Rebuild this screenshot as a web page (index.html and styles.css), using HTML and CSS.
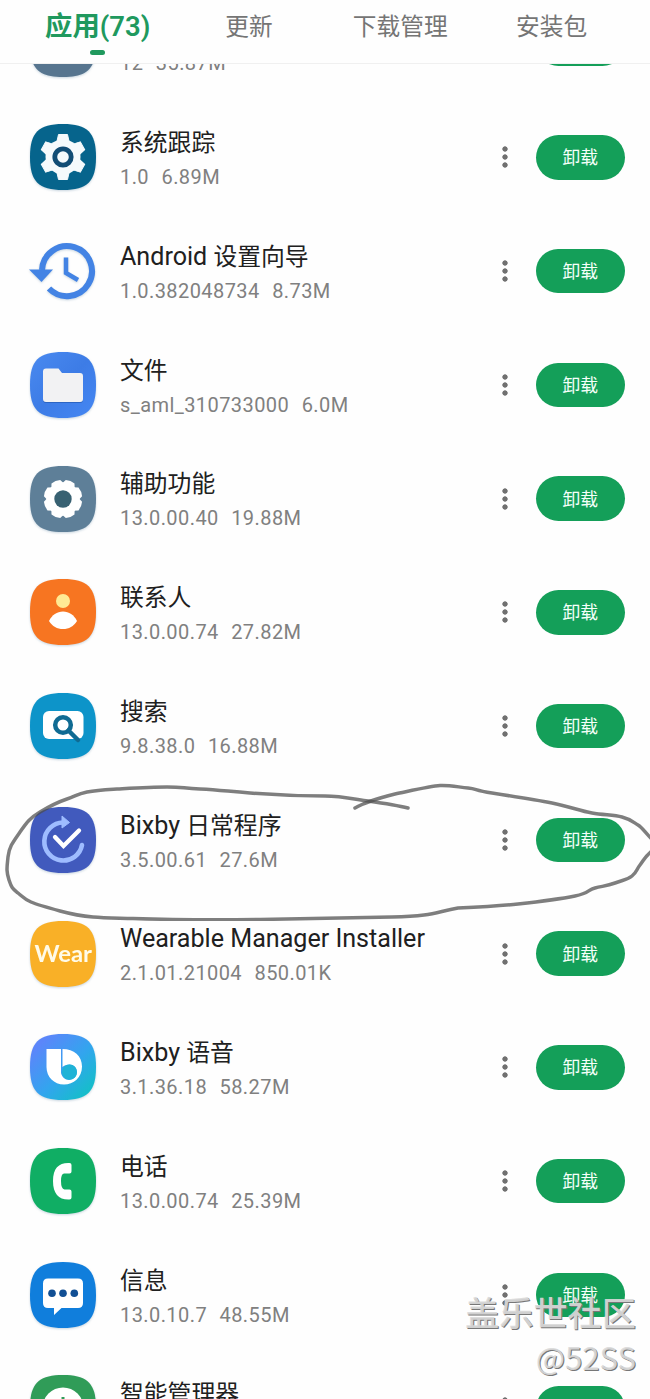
FILE: index.html
```
<!DOCTYPE html>
<html lang="zh-CN">
<head>
<meta charset="utf-8">
<title>应用管理</title>
<link rel="stylesheet" href="styles.css">
</head>
<body>
<svg class="defs" width="0" height="0">
  <defs>
    <path id="tile" d="M33 0C57.5 0 66 8.500 66 33S57.500 66 33 66 0 57.500 0 33 8.500 0 33 0Z"/>
    <linearGradient id="voice" x1="0" y1="0" x2="1" y2="1">
      <stop offset=".15" stop-color="#5b86fa"/><stop offset=".55" stop-color="#32a5ee"/><stop offset=".9" stop-color="#14bfc8"/>
    </linearGradient>
    <linearGradient id="folder" x1="0" y1="0" x2="1" y2="1">
      <stop offset="0" stop-color="#4a8af0"/><stop offset=".5" stop-color="#3d7ce6"/><stop offset="1" stop-color="#4587f3"/>
    </linearGradient>
  </defs>
</svg>
<div class="screen">
  <nav class="tabs">
    <a class="tab active">应用(73)</a>
    <a class="tab">更新</a>
    <a class="tab">下载管理</a>
    <a class="tab">安装包</a>
  </nav>
  <main class="viewport">
    <ul class="list">
      <li class="row">
        <svg class="icon" viewBox="0 0 66 66"><use href="#tile" fill="#57758f"/></svg>
        <div class="info"><div class="name">&nbsp;</div><div class="meta"><span>12</span><span>35.87M</span></div></div>
        <i class="more"></i><button class="remove"></button>
      </li>
      <li class="row">
        <svg class="icon" viewBox="0 0 66 66"><use href="#tile" fill="#06648c"/><g fill="#f5fafc"><circle cx="33" cy="33" r="17.500"/><g id="tooth"><path id="t" d="M28.500 10.500h9l2 9h-13z" stroke="#f5fafc" stroke-linejoin="round"/><use href="#t" transform="rotate(60 33 33)"/><use href="#t" transform="rotate(120 33 33)"/></g><use href="#tooth" transform="rotate(180 33 33)"/></g><circle cx="33" cy="33" r="8.200" fill="none" stroke="#114d75" stroke-width="4.800"/></svg>
        <div class="info"><div class="name"><span class="zh">系统跟踪</span></div><div class="meta"><span>1.0</span><span>6.89M</span></div></div>
        <i class="more"></i><button class="remove">卸载</button>
      </li>
      <li class="row">
        <svg class="icon" viewBox="0 0 66 66"><g fill="none" stroke="#4383e4" stroke-width="6"><path d="M12 32A25 25 0 1 1 19 50.500"/><path d="M36 19.500v15.500l12 7" stroke-width="4.500"/></g><path d="M-1 31.500h24L11.500 44z" fill="#4383e4"/></svg>
        <div class="info"><div class="name">Android <span class="zh">设置向导</span></div><div class="meta"><span>1.0.382048734</span><span>8.73M</span></div></div>
        <i class="more"></i><button class="remove">卸载</button>
      </li>
      <li class="row">
        <svg class="icon" viewBox="0 0 66 66"><use href="#tile" fill="url(#folder)"/><path d="M16 17.500h12.500l3.500 4.500h18q3 0 3 3v23q0 3-3 3H16q-3 0-3-3V20.500q0-3 3-3z" fill="#2c65c3"/><path d="M16 16.500h12.500l3.500 4.500h18q3 0 3 3v23q0 3-3 3H16q-3 0-3-3V19.500q0-3 3-3z" fill="#f2f2f3"/></svg>
        <div class="info"><div class="name"><span class="zh">文件</span></div><div class="meta"><span>s_aml_310733000</span><span>6.0M</span></div></div>
        <i class="more"></i><button class="remove">卸载</button>
      </li>
      <li class="row">
        <svg class="icon" viewBox="0 0 66 66"><use href="#tile" fill="#5e7f98"/><g fill="#fff"><circle cx="33" cy="33" r="16.500"/><g id="cogs"><path id="c" d="M28.300 14.300Q33 12.800 37.700 14.300L40.500 20.500h-15z" transform="rotate(22.500 33 33)"/><use href="#c" transform="rotate(45 33 33)"/><use href="#c" transform="rotate(90 33 33)"/><use href="#c" transform="rotate(135 33 33)"/></g><use href="#cogs" transform="rotate(180 33 33)"/></g><circle cx="33" cy="33" r="8.700" fill="#386172"/></svg>
        <div class="info"><div class="name"><span class="zh">辅助功能</span></div><div class="meta"><span>13.0.00.40</span><span>19.88M</span></div></div>
        <i class="more"></i><button class="remove">卸载</button>
      </li>
      <li class="row">
        <svg class="icon" viewBox="0 0 66 66"><use href="#tile" fill="#f77521"/><circle cx="33" cy="22" r="7" fill="#ffea94"/><path d="M19 42C22 36 27 32.500 33 32.500S44 36 47 42C43.500 47.500 39 50 33 50S22.500 47.500 19 42Z" fill="#fff"/></svg>
        <div class="info"><div class="name"><span class="zh">联系人</span></div><div class="meta"><span>13.0.00.74</span><span>27.82M</span></div></div>
        <i class="more"></i><button class="remove">卸载</button>
      </li>
      <li class="row">
        <svg class="icon" viewBox="0 0 66 66"><use href="#tile" fill="#0d94c9"/><rect x="13" y="18" width="40.500" height="28" rx="6" fill="#fff"/><g fill="none" stroke="#106b93" stroke-width="4.500"><circle cx="33" cy="32" r="7.800" fill="#fff"/><path d="M38.500 37.500L48 47" stroke-linecap="round"/></g></svg>
        <div class="info"><div class="name"><span class="zh">搜索</span></div><div class="meta"><span>9.8.38.0</span><span>16.88M</span></div></div>
        <i class="more"></i><button class="remove">卸载</button>
      </li>
      <li class="row">
        <svg class="icon" viewBox="0 0 66 66"><use href="#tile" fill="#415abd"/><path d="M33 15.500A19 19 0 1 0 52 38" fill="none" stroke="#9ebcff" stroke-width="4.600" stroke-linecap="round"/><path d="M32 9l7.500 6.500-7.500 5.500z" fill="#9ebcff" stroke="#9ebcff" stroke-linejoin="round"/><path d="M25 30l8.500 9L49 23.500" fill="none" stroke="#fff" stroke-width="4.300" stroke-linecap="round"/></svg>
        <div class="info"><div class="name">Bixby <span class="zh">日常程序</span></div><div class="meta"><span>3.5.00.61</span><span>27.6M</span></div></div>
        <i class="more"></i><button class="remove">卸载</button>
      </li>
      <li class="row">
        <svg class="icon" viewBox="0 0 66 66"><use href="#tile" fill="#f9b027"/><text class="wear" x="4.500" y="40.500" textLength="57.500" lengthAdjust="spacingAndGlyphs">Wear</text></svg>
        <div class="info"><div class="name">Wearable Manager Installer</div><div class="meta"><span>2.1.01.21004</span><span>850.01K</span></div></div>
        <i class="more"></i><button class="remove">卸载</button>
      </li>
      <li class="row">
        <svg class="icon" viewBox="0 0 66 66"><use href="#tile" fill="url(#voice)"/><path d="M16.500 15H31V39C32 43 35 46 39 46C49.500 46 49.500 30.500 39.500 30.500C36.500 30.500 34 31.500 32.500 33V15C44 15 52 22 52 32.500C52 43.500 43.500 50.500 34 50.500C24 50.500 16.500 43 16.500 33Z" fill="#fff"/><circle cx="39.500" cy="38" r="7.500" fill="#1fb3d6"/></svg>
        <div class="info"><div class="name">Bixby <span class="zh">语音</span></div><div class="meta"><span>3.1.36.18</span><span>58.27M</span></div></div>
        <i class="more"></i><button class="remove">卸载</button>
      </li>
      <li class="row">
        <svg class="icon" viewBox="0 0 66 66"><use href="#tile" fill="#10ae64"/><path d="M39.500 15C29 14.500 23 20 23 33S29 52 39.500 51.500Q41.500 51.500 41.500 49.500V43.500Q41.500 41.500 39.500 41.500H34.500Q31 41 31 33T34.500 25.500H39.500Q41.500 25.500 41.500 23.500V17Q41.500 15 39.500 15Z" fill="#fff"/></svg>
        <div class="info"><div class="name"><span class="zh">电话</span></div><div class="meta"><span>13.0.00.74</span><span>25.39M</span></div></div>
        <i class="more"></i><button class="remove">卸载</button>
      </li>
      <li class="row">
        <svg class="icon" viewBox="0 0 66 66"><use href="#tile" fill="#107edc"/><path d="M18 16.500h30q5 0 5 5v19.500q0 5-5 5H31.500l-7.500 7V46H18q-5 0-5-5V21.500q0-5 5-5z" fill="#fff"/><g fill="#114f94"><circle cx="22" cy="31.300" r="3.800"/><circle cx="33" cy="31.300" r="3.800"/><circle cx="44.300" cy="31.300" r="3.800"/></g></svg>
        <div class="info"><div class="name"><span class="zh">信息</span></div><div class="meta"><span>13.0.10.7</span><span>48.55M</span></div></div>
        <i class="more"></i><button class="remove">卸载</button>
      </li>
      <li class="row">
        <svg class="icon" viewBox="0 0 66 66"><use href="#tile" fill="#309c58"/><circle cx="33" cy="33" r="20.500" fill="#fff"/><path d="M33 22v14" stroke="#309c58" stroke-width="3"/></svg>
        <div class="info"><div class="name"><span class="zh">智能管理器</span></div><div class="meta">&nbsp;</div></div>
        <i class="more"></i><button class="remove"></button>
      </li>
    </ul>
  </main>
  <svg class="scribble" viewBox="0 0 650 150">
    <path d="M408 38C396 35 382 33 368 31S340 26 325 26C300 26 275 25 250 23S219 20 200 19S183 17 167 17S135 18 117 19S97 20 87 22S76 26 67 29S50 36 40 42S27 52 20 62S9 77 8 87S6 101 9 110S13 119 18 123S24 129 31 132S49 138 60 141S81 146 93 147S118 148 133 148.500S215 150 260 149.500S350 148 392 147S435 142 458 138C480 137 500 136 518 134S560 129 575 126S587 120 595 118S607 116 615 113S627 110 632 106S636 100 640 95S645 86 653 80"/>
    <path d="M653 70C646 64 643 58 638 55S630 49 622 47S604 45 592 43S568 36 552 33S511 26 492 23S478 19 468 18S449 15 440 15.500S414 20 395 24C383 27 367 31 355 38"/>
  </svg>
  <div class="watermark"><div class="site">盖乐世社区</div><div class="user">@52SS</div></div>
</div>
</body>
</html>
```
FILE: styles.css
```
* { box-sizing: border-box; }
body { margin: 0; background: #fefefe; font-family: Roboto, "Noto Sans CJK SC", sans-serif; }
.defs { position: absolute; }
.screen { position: relative; height: 1399px; overflow: hidden; display: flex; flex-direction: column; }
.tabs { flex: none; height: 64px; padding: 0 22px; display: grid; grid-template-columns: repeat(4, 151.300px); border-bottom: 1px solid #f0f0f0; }
.tab { position: relative; text-align: center; font-size: 23.700px; line-height: 55px; color: #757575; white-space: nowrap; }
.tab.active { font-size: 27.400px; font-weight: 600; color: #20995e; }
.tab.active::after { content: ""; position: absolute; left: 50%; top: 50px; width: 15px; height: 5px; margin-left: -8px; border-radius: 3px; background: #20995e; }
.viewport { flex: 1; min-height: 0; overflow: hidden; }
.list { list-style: none; margin: -77.200px 0 0; padding: 0; }
.row { height: 113.740px; padding: 0 25.500px 0 30px; display: flex; align-items: center; }
.icon { flex: none; width: 66px; height: 66px; overflow: visible; filter: drop-shadow(0 1px 1px rgba(40, 90, 130, .25)); }
.wear { font: 700 22px Lato, sans-serif; fill: #fffbe9; }
.info { flex: 1; padding: 3.500px 0 0 24px; white-space: nowrap; }
.name { font-size: 25.100px; line-height: 36px; color: #202020; }
.zh { font-size: 23.800px; }
.meta { display: flex; gap: 12.500px; font-size: 20px; line-height: 32px; letter-spacing: .42px; color: #808080; }
.more { flex: none; width: 6px; height: 24px; margin-right: 28.500px; background: radial-gradient(circle at center, #707070 2.300px, transparent 3px) 0 0 / 6px 8px; }
.remove { flex: none; width: 88.500px; height: 44.500px; padding: 0; border: 0; border-radius: 23px; background: #149f59; color: #f5fff9; font: 17.800px/42px "Noto Sans CJK SC", sans-serif; padding-bottom: 2px; }
.scribble { position: absolute; left: 0; top: 769px; width: 650px; height: 152px; fill: none; stroke: #4c4c4c; stroke-opacity: .72; stroke-width: 3.500px; stroke-linecap: round; }
.watermark { position: absolute; right: 14px; top: 1288px; text-align: right; font-family: "Noto Sans CJK SC", sans-serif; color: rgba(218, 218, 218, .92); text-shadow: 1px 1px 0 #777; }
.site { font-size: 34.200px; line-height: 47px; font-weight: 500; }
.user { font-size: 31px; line-height: 44px; }
```
